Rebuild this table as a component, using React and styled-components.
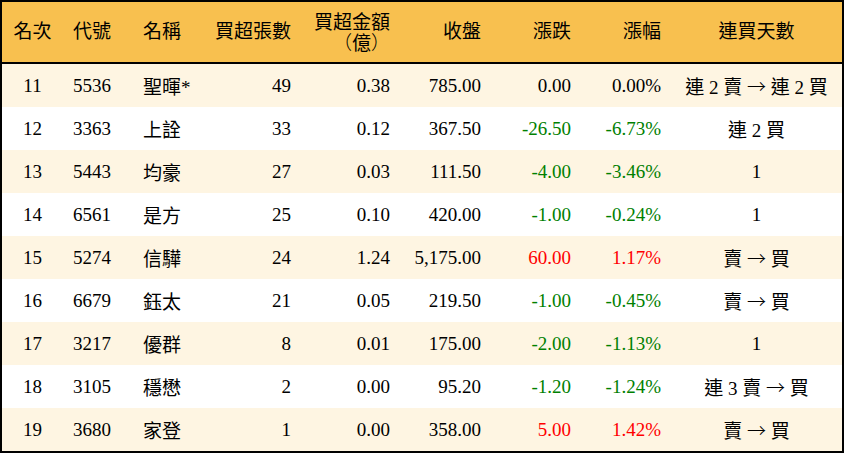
import React from "react";
import styled, { createGlobalStyle } from "styled-components";

const GlobalStyle = createGlobalStyle`
  html, body {
    margin: 0;
    padding: 0;
    background: #fff;
  }
`;

const Frame = styled.div`
  width: 844px;
  box-sizing: border-box;
  border: 2px solid #000;
  font-family: "Liberation Serif", "Noto Sans CJK TC", serif;
  font-size: 19px;
  color: #000;
  text-spacing-trim: space-all;
`;

const Table = styled.table`
  width: 100%;
  border-collapse: collapse;
  table-layout: fixed;
`;

const HeadCell = styled.th`
  height: 60px;
  padding: 0 10px;
  background: #f8c04f;
  border-bottom: 2px solid #000;
  font-weight: 400;
  text-align: ${(p) => p.$align || "left"};
  line-height: 18px;
  white-space: nowrap;
`;

const Sub = styled.span`
  display: inline-block;
  vertical-align: top;
  line-height: 18px;
  margin-top: 1px;
  font-family: "Noto Sans CJK TC", sans-serif;
  text-spacing-trim: space-all;
`;

const Paren = styled.span`
  display: inline-block;
  vertical-align: top;
  width: 19px;
  text-align: ${(p) => (p.$open ? "right" : "left")};
  font-weight: 300;
`;

const Row = styled.tr`
  background: ${(p) => (p.$odd ? "#fef5e2" : "#ffffff")};
`;

const Cell = styled.td`
  height: 43px;
  padding: 0 10px;
  text-align: ${(p) => p.$align || "left"};
  color: ${(p) => p.$color || "#000"};
  white-space: nowrap;
`;

const Arrow = styled.span`
  font-family: "Noto Sans CJK TC", sans-serif;
  font-weight: 300;
`;

const columns = [
  { label: "名次", width: 61, align: "center" },
  { label: "代號", width: 70, align: "left" },
  { label: "名稱", width: 72, align: "left" },
  { label: "買超張數", width: 96, align: "right" },
  { label: "買超金額", sub: "億", width: 99, align: "right" },
  { label: "收盤", width: 91, align: "right" },
  { label: "漲跌", width: 90, align: "right" },
  { label: "漲幅", width: 90, align: "right" },
  { label: "連買天數", width: 171, align: "center" },
];

const rows = [
  ["11", "5536", "聖暉*", "49", "0.38", "785.00", "0.00", "0.00%", "連 2 賣 → 連 2 買"],
  ["12", "3363", "上詮", "33", "0.12", "367.50", "-26.50", "-6.73%", "連 2 買"],
  ["13", "5443", "均豪", "27", "0.03", "111.50", "-4.00", "-3.46%", "1"],
  ["14", "6561", "是方", "25", "0.10", "420.00", "-1.00", "-0.24%", "1"],
  ["15", "5274", "信驊", "24", "1.24", "5,175.00", "60.00", "1.17%", "賣 → 買"],
  ["16", "6679", "鈺太", "21", "0.05", "219.50", "-1.00", "-0.45%", "賣 → 買"],
  ["17", "3217", "優群", "8", "0.01", "175.00", "-2.00", "-1.13%", "1"],
  ["18", "3105", "穩懋", "2", "0.00", "95.20", "-1.20", "-1.24%", "連 3 賣 → 買"],
  ["19", "3680", "家登", "1", "0.00", "358.00", "5.00", "1.42%", "賣 → 買"],
];

const changeColor = (value) => {
  const n = parseFloat(value);
  if (n > 0) return "#ff0000";
  if (n < 0) return "#008000";
  return "#000";
};

// split the streak text so the arrow gets the wide CJK glyph
const renderStreak = (text) => {
  const parts = text.split("→");
  if (parts.length === 1) return text;
  return (
    <>
      {parts[0]}
      <Arrow>→</Arrow>
      {parts[1]}
    </>
  );
};

const App = () => {
  return (
    <>
      <GlobalStyle />
      <Frame>
        <Table>
          <colgroup>
            {columns.map((c) => (
              <col key={c.label} style={{ width: c.width }} />
            ))}
          </colgroup>
          <thead>
            <tr>
              {columns.map((c) => (
                <HeadCell key={c.label} $align={c.align}>
                  {c.label}
                  {c.sub && (
                    <>
                      <br />
                      <Sub>
                        <Paren $open>（</Paren>
                        {c.sub}
                        <Paren>）</Paren>
                      </Sub>
                    </>
                  )}
                </HeadCell>
              ))}
            </tr>
          </thead>
          <tbody>
            {rows.map((r, i) => (
              <Row key={r[0]} $odd={i % 2 === 0}>
                {r.map((v, j) => (
                  <Cell
                    key={j}
                    $align={columns[j].align}
                    $color={j === 6 || j === 7 ? changeColor(r[6]) : undefined}
                  >
                    {j === 8 ? renderStreak(v) : v}
                  </Cell>
                ))}
              </Row>
            ))}
          </tbody>
        </Table>
      </Frame>
    </>
  );
};

export default App;
